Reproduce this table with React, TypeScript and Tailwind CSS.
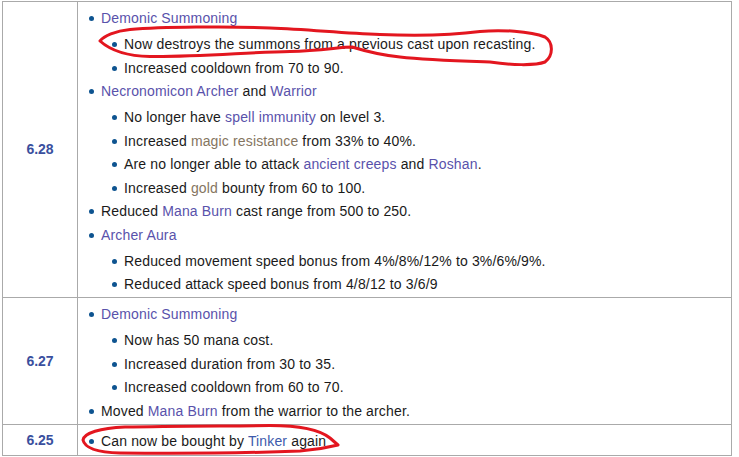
import React from 'react'

type Seg = string | { t: string; k: 'link' | 'grey' | 'blue' }
type Item = { text: Seg[]; sub?: Item[] }

const link = (t: string): Seg => ({ t, k: 'link' })
const grey = (t: string): Seg => ({ t, k: 'grey' })
const blue = (t: string): Seg => ({ t, k: 'blue' })

const ROWS: Array<{ version: string; height: string; items: Item[] }> = [
  {
    version: '6.28',
    height: 'h-[295px]',
    items: [
      {
        text: [link('Demonic Summoning')],
        sub: [
          { text: ['Now destroys the summons from a previous cast upon recasting.'] },
          { text: ['Increased cooldown from 70 to 90.'] },
        ],
      },
      {
        text: [link('Necronomicon Archer'), ' and ', link('Warrior')],
        sub: [
          { text: ['No longer have ', link('spell immunity'), ' on level 3.'] },
          { text: ['Increased ', grey('magic resistance'), ' from 33% to 40%.'] },
          { text: ['Are no longer able to attack ', link('ancient creeps'), ' and ', link('Roshan'), '.'] },
          { text: ['Increased ', grey('gold'), ' bounty from 60 to 100.'] },
        ],
      },
      { text: ['Reduced ', link('Mana Burn'), ' cast range from 500 to 250.'] },
      {
        text: [link('Archer Aura')],
        sub: [
          { text: ['Reduced movement speed bonus from 4%/8%/12% to 3%/6%/9%.'] },
          { text: ['Reduced attack speed bonus from 4/8/12 to 3/6/9'] },
        ],
      },
    ],
  },
  {
    version: '6.27',
    height: 'h-[127px] border-t',
    items: [
      {
        text: [link('Demonic Summoning')],
        sub: [
          { text: ['Now has 50 mana cost.'] },
          { text: ['Increased duration from 30 to 35.'] },
          { text: ['Increased cooldown from 60 to 70.'] },
        ],
      },
      { text: ['Moved ', link('Mana Burn'), ' from the warrior to the archer.'] },
    ],
  },
  {
    version: '6.25',
    height: 'h-[31px] border-t',
    items: [{ text: ['Can now be bought by ', blue('Tinker'), ' again'] }],
  },
]

function Text({ segs }: { segs: Seg[] }) {
  return (
    <span className="whitespace-pre">
      {segs.map((s, i) => {
        if (typeof s === 'string') return <span key={i}>{s}</span>
        if (s.k === 'grey') return <span key={i} className="text-[#857561]">{s.t}</span>
        if (s.k === 'blue') return <span key={i} className="text-[#3d5aac]">{s.t}</span>
        return <span key={i} className="text-[#5952ab]">{s.t}</span>
      })}
    </span>
  )
}

function List({ items, nested }: { items: Item[]; nested?: boolean }) {
  return (
    <ul className={`flex flex-col gap-px pl-[11px] ${nested ? 'mt-[3.5px]' : ''}`}>
      {items.map((item, i) => (
        <li key={i} className="flex gap-[7px]">
          <span className="mt-[9px] h-[5px] w-[5px] shrink-0 rounded-full bg-[#0e5490]" />
          <div className="flex flex-col">
            <div className="leading-[22.5px] tracking-[0.15px]">
              <Text segs={item.text} />
            </div>
            {item.sub && <List items={item.sub} nested />}
          </div>
        </li>
      ))}
    </ul>
  )
}

export default function App() {
  return (
    <main className="relative h-[457px] w-[739px] overflow-hidden bg-white pt-px font-['Liberation_Sans',Arial,sans-serif] text-[14px] text-[#1a1a1a]">
      <div className="ml-[2px] w-[730px] border border-[#aaaaaa]">
        {ROWS.map((row) => (
          <div key={row.version} className={`flex border-[#aaaaaa] ${row.height}`}>
            <div className="flex w-[75px] shrink-0 items-center justify-center border-r border-[#aaaaaa] font-bold text-[#3a4f9e]">
              {row.version}
            </div>
            <div className="flex-1 pt-[5px]">
              <List items={row.items} />
            </div>
          </div>
        ))}
      </div>

      {/* red hand-drawn annotations */}
      <svg
        className="pointer-events-none absolute left-0 top-0"
        width="739"
        height="457"
        viewBox="0 0 739 457"
        fill="none"
        stroke="#e3161f"
        strokeWidth="3"
        strokeLinejoin="round"
        strokeLinecap="round"
      >
        <path d="M100,41 C104,36 115,31 130,29.5 C160,27 230,26 270,28 C310,29.5 340,33 380,34.5 C420,36 450,35.5 480,31.5 C500,29.5 530,31 545,37 C553,42 554,55 545,62 C535,66 510,65 490,62 C460,61 425,60 400,57 C380,55 365,51 352,47 C340,47 320,51 290,51.5 C250,52 200,57 150,56.5 C125,56 110,50 100,41 Z" />
        <path d="M83,440 C84,433 100,428 125,427 C170,426 230,426 270,425.5 C300,425.5 320,430 330,438 L338,445 C330,447 315,450 300,451 C250,453 180,453.5 120,453 C100,452.5 85,449 83,440 Z" />
      </svg>
    </main>
  )
}
